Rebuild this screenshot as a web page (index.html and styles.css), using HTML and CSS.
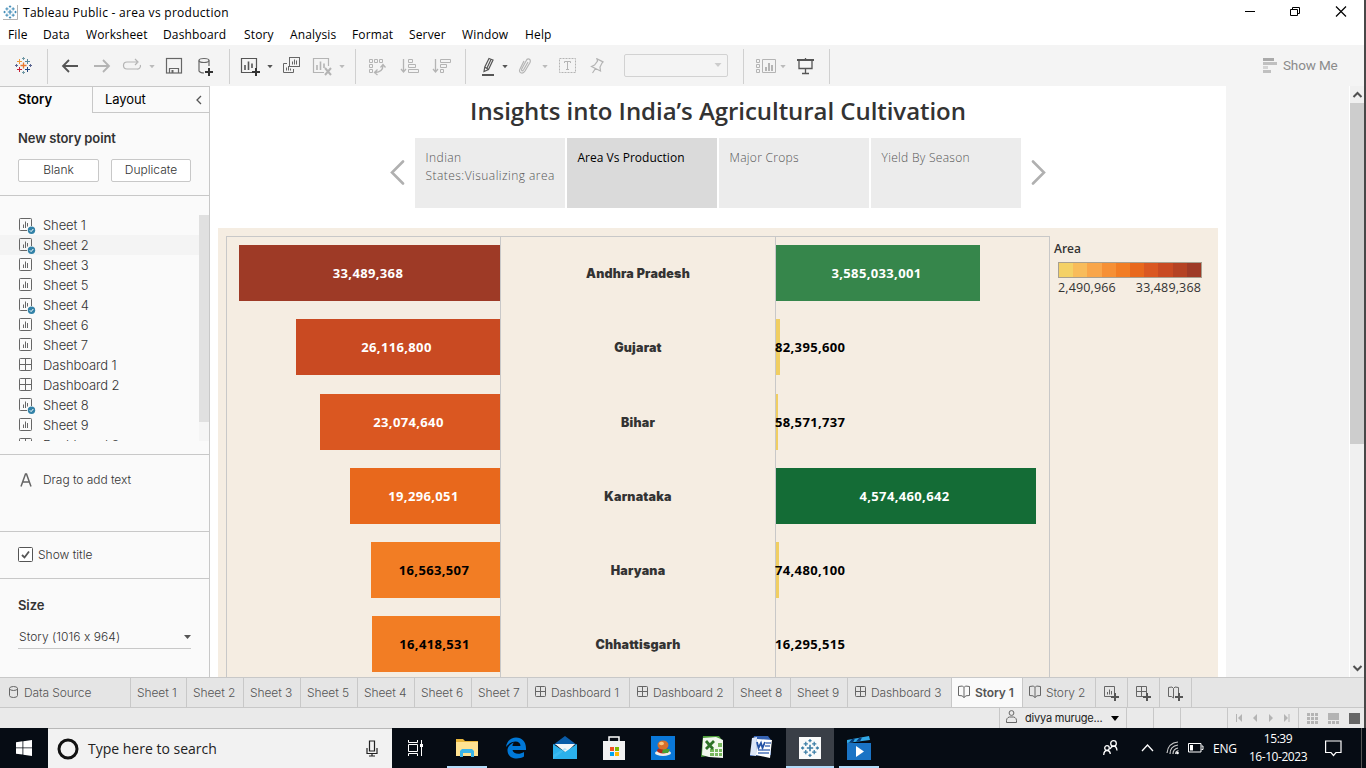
FILE: index.html
```html
<!DOCTYPE html>
<html lang="en">
<head>
<meta charset="utf-8">
<title>Tableau Public - area vs production</title>
<link rel="stylesheet" href="styles.css">
</head>
<body>
<svg class="defs" width="0" height="0">
  <symbol id="logo" viewBox="0 0 18 18"><g fill="none" stroke="currentColor"><path stroke-width="1.5" d="M9 6v6M6 9h6"/><path stroke-width="1.2" d="M5 3v4M3 5h4M13 3v4M11 5h4M5 11v4M3 13h4M13 11v4M11 13h4M9 .5v3M7.5 2h3M9 14.5v3M7.5 16h3M2 7.5v3M.5 9h3M16 7.5v3M14.500 9h3"/></g></symbol>
  <symbol id="caret" viewBox="0 0 6 20"><path fill="currentColor" d="M.3 9h5.400L3 12.300z"/></symbol>
  <symbol id="sheet" viewBox="0 0 16 14"><g fill="none" stroke="#666"><rect x=".5" y=".5" width="12" height="12" rx=".8"/><path d="M4.500 6.500V10M6.500 3.500V10M8.500 5V10"/></g></symbol>
  <symbol id="sheetok" viewBox="0 0 17 16"><path fill="none" stroke="#666" d="M8 12.500H1.300a.8.8 0 0 1-.8-.8V1.300A.8.8 0 0 1 1.300.5h10.400a.8.8 0 0 1 .8.8V8M4.500 6.500V10M6.500 3.500V10M8.500 5v3.500"/><circle cx="12.500" cy="12.300" r="3.700" fill="#3282a8"/><path fill="none" stroke="#fff" d="m10.800 12.300 1.300 1.300 2.200-2.600"/></symbol>
  <symbol id="dash" viewBox="0 0 13 13"><g fill="none" stroke="#666"><rect x=".5" y=".5" width="12" height="12" rx=".8"/><path d="M6.500.5v12M.5 6.500h12"/></g></symbol>
  <symbol id="dashtab" viewBox="0 0 11 11"><g fill="none" stroke="#666"><rect x=".5" y=".5" width="10" height="10" rx=".8"/><path d="M5.500.5v10M.5 5.500h10"/></g></symbol>
  <symbol id="book" viewBox="0 0 12 13"><path fill="none" stroke="#666" d="M6 2.500 4.500 1 .5 1.500v9l3.500.3 2 1.700 2-1.700 3.500-.3v-9L7.500 1zM6 2.500v10"/></symbol>
</svg>

<div class="window">
<header class="titlebar">
  <svg class="app-icon" viewBox="0 0 16 16"><path fill="none" stroke="#aaa" d="M15.500 0v15.500H0"/><use href="#logo" x="0" y="0" width="15" height="15"/></svg>
  <span class="title-text">Tableau Public - area vs production</span>
  <svg class="win-buttons" viewBox="0 0 103 12"><g fill="none" stroke="#000"><path d="M0 6.500h10M45.500 4.500h7v6h-7zM47.500 4.500v-2h7v6h-2"/><path stroke-width="1.200" d="m91 1.500 10 10M101 1.500l-10 10"/></g></svg>
</header>
<nav class="menu"><span>File</span><span>Data</span><span>Worksheet</span><span>Dashboard</span><span>Story</span><span>Analysis</span><span>Format</span><span>Server</span><span>Window</span><span>Help</span></nav>

<div class="toolbar">
  <svg class="ic" viewBox="0 0 20 20" fill="none"><path stroke="#e8762c" stroke-width="1.300" d="M9.500 6.500v6M6.500 9.500h6"/><path stroke="#ee9a3a" d="M5.500 3v5M3 5.500h5"/><path stroke="#59879b" d="M13.500 3v5M11 5.500h5"/><path stroke="#c72037" d="M5.500 11v5M3 13.500h5"/><path stroke="#1f457e" d="M13.500 11v5M11 13.500h5"/><path stroke="#7199a6" d="M9.500 1v3M8 2.500h3M9.500 15v3M8 16.500h3"/><path stroke="#5b6591" d="M2.500 8v3M1 9.500h3M16.500 8v3M15 9.500h3"/></svg>
  <i class="sep"></i>
  <svg class="ic" viewBox="0 0 20 20" fill="none" stroke="#555" stroke-width="1.800"><path d="M17 10H2M8 4l-6 6 6 6"/></svg>
  <svg class="ic" viewBox="0 0 20 20" fill="none" stroke="#b4b4b4" stroke-width="1.800"><path d="M1 10h15M10 4l6 6-6 6"/></svg>
  <svg class="ic" viewBox="0 0 20 20" fill="none" stroke="#b4b4b4" stroke-width="1.200"><path d="M15 6H5a3.500 3.500 0 0 0 0 7h10a3 3 0 0 0 3.300-4M13 3l3 3-3 3"/></svg>
  <svg class="caret off"><use href="#caret"/></svg>
  <svg class="ic" viewBox="0 0 20 20" fill="none" stroke="#666" stroke-width="1.200"><rect x="1.500" y="2.500" width="15" height="14.500"/><path d="M4.500 17v-4.500h9V17"/><path d="M7.500 14v3" stroke-width="2"/></svg>
  <svg class="ic" viewBox="0 0 20 20" fill="none" stroke="#666" stroke-width="1.200"><ellipse cx="7" cy="4.500" rx="5" ry="2"/><path d="M2 4.500V15q1 2 5 2M12 4.500V10"/><path d="M12 12v8M8 16h8" stroke="#333" stroke-width="2"/></svg>
  <i class="sep"></i>
  <svg class="ic" viewBox="0 0 20 20" fill="none" stroke="#555" stroke-width="1.200"><path d="M12 16.500H1.500v-14h15V12"/><path stroke-width="1.600" d="M5 9v5M8.500 5.500V14M12 7.500V12"/><path d="M16 12v8M12 16h8" stroke="#333" stroke-width="2"/></svg>
  <svg class="caret"><use href="#caret"/></svg>
  <svg class="ic" viewBox="0 0 20 20" fill="none" stroke="#666"><rect x="7.500" y="1.500" width="10" height="9"/><path d="M10.500 5.500v3M12.500 3.500v5M14.500 4.500v4M5 7.500H1.500v9h10V13M4.500 11.500v3M6.500 10v4.500M8.500 12.500v2"/></svg>
  <svg class="ic" viewBox="0 0 20 20" fill="none" stroke="#b4b4b4" stroke-width="1.200"><path d="M12 16.500H1.500v-14h15V10"/><path stroke-width="1.600" d="M5 9v5M8.500 5.500V14M12 7.500V12"/><path d="m13 12 6 7M19 12l-6 7" stroke-width="2"/></svg>
  <svg class="caret off"><use href="#caret"/></svg>
  <i class="sep"></i>
  <svg class="ic" viewBox="0 0 20 20" fill="none" stroke="#b4b4b4"><path d="M2.500 3.500h3v3h-3zM7.500 3.500h3v3h-3zM12.500 3.500h3v3h-3zM2.500 8.500h3v3h-3zM2.500 13.500h3v3h-3z"/><path stroke-width="1.300" d="M8 16.500q8-.5 8-7M13.500 11.500l2.500-3 2.500 3M10.500 13.500l-3 3 3 2.500"/></svg>
  <svg class="ic" viewBox="0 0 20 20" fill="none" stroke="#b4b4b4"><path stroke-width="1.300" d="M3.500 3v13M1 13l2.500 3L6 13"/><path d="M8.500 3.500h4v3h-4zM8.500 8.500h7v3h-7zM8.500 13.500h10v3h-10z"/></svg>
  <svg class="ic" viewBox="0 0 20 20" fill="none" stroke="#b4b4b4"><path stroke-width="1.300" d="M3.500 3v13M1 13l2.500 3L6 13"/><path d="M8.500 3.500h10v3h-10zM8.500 8.500h6v3h-6zM8.500 13.500h3v3h-3z"/></svg>
  <i class="sep"></i>
  <svg class="ic" viewBox="0 0 20 20" fill="none" stroke="#555" stroke-width="1.200"><path d="m8 2.500 4 1.500-4.500 9.500-4.500 2 .8-4.500zM3.800 11l3.700 2.500M10 3.500 6 12"/><path stroke-width="2" d="M1 19h12"/></svg>
  <svg class="caret"><use href="#caret"/></svg>
  <svg class="ic" viewBox="0 0 20 20" fill="none" stroke="#b4b4b4" stroke-width="1.200"><path d="M11 6 6.500 14c-1 1.500-2.500.5-1.800-1L9 5c1.500-3.500 5.500-2 4 1.500L8 15c-2.500 4-7 1.500-5-2L7 5"/></svg>
  <svg class="caret off"><use href="#caret"/></svg>
  <svg class="ic" viewBox="0 0 20 20" fill="none" stroke="#b4b4b4"><rect x="1.500" y="2.500" width="16" height="14" stroke-dasharray="2 1"/><path d="M6.500 7V5.500h6V7M9.500 5.500v8M8 13.500h3"/></svg>
  <svg class="ic" viewBox="0 0 20 20" fill="none" stroke="#b4b4b4" stroke-width="1.200"><path d="m7 3 6 3-1 1-2 4 .5 4-9-4.500L4.500 9l3-4zM5.500 12.500 2.500 17M6.500 2.500l7 3.500"/></svg>
  <span class="combo"><svg width="8" height="5"><path fill="#ccc" d="M.5 0h7L4 4z"/></svg></span>
  <i class="sep"></i>
  <svg class="ic" viewBox="0 0 22 20" fill="none" stroke="#b4b4b4"><path d="M1.500 3.500h3v3h-3zM1.500 8.500h3v3h-3zM1.500 13.500h3v3h-3zM7.500 3.500h13v13h-13z"/><path stroke-width="2" d="M11 11v4M14 7v8M17 9v6"/></svg>
  <svg class="caret off"><use href="#caret"/></svg>
  <svg class="ic" viewBox="0 0 20 20" fill="none" stroke="#555" stroke-width="1.300"><path stroke-width="2" d="M1 4h17"/><path d="M3 4v8.500h13V4M9.500 2v2M9.500 12.500v5M6 17.500h7"/></svg>
  <i class="sep"></i>
  <svg class="ic" viewBox="0 0 20 20"><path fill="#aaa" d="M0 2h11v3H0z"/><path fill="#c0c0c0" d="M0 6h14v3H0zM0 14h8v3H0z"/><path fill="#d4d4d4" d="M0 10h5v3H0z"/></svg>
  <span class="showme">Show Me</span>
</div>

<main class="main">
  <aside class="side">
    <div class="side-tabs"><span class="on">Story</span><span class="off">Layout<svg width="6" height="10" viewBox="0 0 6 10"><path fill="none" stroke="#555" stroke-width="1.300" d="M5 1 1 5l4 4"/></svg></span></div>
    <section class="new-point"><h3>New story point</h3><div class="btns"><button>Blank</button><button>Duplicate</button></div></section>
    <section class="sheets">
      <ul>
        <li><svg><use href="#sheetok" width="17" height="16"/></svg>Sheet 1</li>
        <li class="hover"><svg><use href="#sheetok" width="17" height="16"/></svg>Sheet 2</li>
        <li><svg><use href="#sheet" width="16" height="14"/></svg>Sheet 3</li>
        <li><svg><use href="#sheet" width="16" height="14"/></svg>Sheet 5</li>
        <li><svg><use href="#sheetok" width="17" height="16"/></svg>Sheet 4</li>
        <li><svg><use href="#sheet" width="16" height="14"/></svg>Sheet 6</li>
        <li><svg><use href="#sheet" width="16" height="14"/></svg>Sheet 7</li>
        <li><svg><use href="#dash" width="13" height="13"/></svg>Dashboard 1</li>
        <li><svg><use href="#dash" width="13" height="13"/></svg>Dashboard 2</li>
        <li><svg><use href="#sheetok" width="17" height="16"/></svg>Sheet 8</li>
        <li><svg><use href="#sheet" width="16" height="14"/></svg>Sheet 9</li>
        <li><svg><use href="#dash" width="13" height="13"/></svg>Dashboard 3</li>
      </ul>
      <div class="track"><div class="thumb"></div></div>
    </section>
    <section class="drag"><svg width="12" height="14" viewBox="0 0 12 14"><path fill="none" stroke="#666" stroke-width="1.500" d="M1 13.500 5.500 1h1L11 13.500M2.800 9h6.400"/></svg>Drag to add text</section>
    <section class="show"><svg width="15" height="15" viewBox="0 0 15 15"><rect x=".5" y=".5" width="14" height="14" rx="1" fill="#fff" stroke="#555"/><path fill="none" stroke="#555" stroke-width="1.800" d="m4 8 2.500 2.500L11 4.500"/></svg>Show title</section>
    <section class="size"><h3>Size</h3><div class="select">Story (1016 x 964)<svg width="7" height="4"><path fill="#555" d="M0 0h7L3.500 4z"/></svg></div></section>
  </aside>

  <div class="canvas">
    <div class="story">
      <h1>Insights into India’s Agricultural Cultivation</h1>
      <div class="points">
        <svg width="16" height="26" viewBox="0 0 16 26"><path fill="none" stroke="#b0b0b0" stroke-width="2.600" stroke-linecap="round" d="M14 1.500 3 12.500l11 11"/></svg>
        <div class="cards"><div>Indian<br>States:Visualizing area</div><div class="on">Area Vs Production</div><div>Major Crops</div><div>Yield By Season</div></div>
        <svg width="16" height="26" viewBox="0 0 16 26"><path fill="none" stroke="#b0b0b0" stroke-width="2.600" stroke-linecap="round" d="m2 1.500 11 11-11 11"/></svg>
      </div>
      <div class="viz">
        <div class="chart">
          <div class="row"><div class="cell l"><b class="bar" style="width:261px;background:#9e3a26">33,489,368</b></div><div class="cell name">Andhra Pradesh</div><div class="cell r"><b class="bar" style="width:204px;background:#36864b">3,585,033,001</b></div></div>
          <div class="row"><div class="cell l"><b class="bar" style="width:204px;background:#c94a22">26,116,800</b></div><div class="cell name">Gujarat</div><div class="cell r"><b class="bar small" style="width:4px">82,395,600</b></div></div>
          <div class="row"><div class="cell l"><b class="bar" style="width:180px;background:#da5721">23,074,640</b></div><div class="cell name">Bihar</div><div class="cell r"><b class="bar small" style="width:2px">58,571,737</b></div></div>
          <div class="row"><div class="cell l"><b class="bar" style="width:150px;background:#e8681c">19,296,051</b></div><div class="cell name">Karnataka</div><div class="cell r"><b class="bar" style="width:260px;background:#146c36">4,574,460,642</b></div></div>
          <div class="row"><div class="cell l"><b class="bar dark" style="width:129px;background:#f27d24">16,563,507</b></div><div class="cell name">Haryana</div><div class="cell r"><b class="bar small" style="width:3px">74,480,100</b></div></div>
          <div class="row"><div class="cell l"><b class="bar dark" style="width:128px;background:#f27d24">16,418,531</b></div><div class="cell name">Chhattisgarh</div><div class="cell r"><b class="bar small" style="width:0px">16,295,515</b></div></div>
        </div>
        <div class="legend"><h4>Area</h4><div class="ramp"></div><div class="range"><span>2,490,966</span><span>33,489,368</span></div></div>
      </div>
    </div>
    <div class="vscroll"><svg width="14" height="17"><path fill="none" stroke="#505050" stroke-width="2" d="m3.500 11 4-4 4 4"/></svg><div class="thumb"></div><svg width="14" height="17"><path fill="none" stroke="#505050" stroke-width="2" d="m3.500 6 4 4 4-4"/></svg></div>
  </div>
</main>

<nav class="tabs">
  <span><svg width="9" height="12" viewBox="0 0 9 12"><g fill="none" stroke="#666"><ellipse cx="4.500" cy="2.500" rx="4" ry="2"/><path d="M.5 2.500v7q0 2 4 2t4-2v-7"/></g></svg>Data Source</span>
  <span>Sheet 1</span><span>Sheet 2</span><span>Sheet 3</span><span>Sheet 5</span><span>Sheet 4</span><span>Sheet 6</span><span>Sheet 7</span>
  <span class="d"><svg width="11" height="11"><use href="#dashtab" width="11" height="11"/></svg>Dashboard 1</span>
  <span class="d"><svg width="11" height="11"><use href="#dashtab" width="11" height="11"/></svg>Dashboard 2</span>
  <span>Sheet 8</span><span>Sheet 9</span>
  <span class="d"><svg width="11" height="11"><use href="#dashtab" width="11" height="11"/></svg>Dashboard 3</span>
  <span class="on"><svg width="12" height="13"><use href="#book" width="12" height="13"/></svg>Story 1</span>
  <span><svg width="12" height="13"><use href="#book" width="12" height="13"/></svg>Story 2</span>
  <span class="add"><svg width="16" height="16" viewBox="0 0 16 16"><path fill="none" stroke="#666" d="M7 10.500H.5V.5h10V7M3.500 6v2.500M5.500 3.500v5M7.500 5v3.500"/><path stroke="#555" stroke-width="2" d="M11 7v8M7 11h8"/></svg></span>
  <span class="add"><svg width="16" height="16" viewBox="0 0 16 16"><path fill="none" stroke="#666" d="M7 10.500H.5V.5h10V7M5.500.5v10M.5 5.500h10"/><path stroke="#555" stroke-width="2" d="M11 7v8M7 11h8"/></svg></span>
  <span class="add"><svg width="16" height="16" viewBox="0 0 16 16"><path fill="none" stroke="#666" d="M5.500 12V2.500L4 1 .5 1.500v9h3zM5.500 2.500 7 1l3.500.5V7"/><path stroke="#555" stroke-width="2" d="M11 7v8M7 11h8"/></svg></span>
  <span></span>
</nav>

<footer class="status">
  <span></span>
  <span class="user"><svg width="11" height="14" viewBox="0 0 11 14"><g fill="none" stroke="#666"><circle cx="5.500" cy="3" r="2.400"/><path d="M.5 12.500q-.5-5 3-5.500h4q3.500.5 3 5.500z"/></g></svg>divya muruge...<svg class="tri" width="8" height="5"><path d="M0 0h8L4 5z"/></svg></span>
  <span></span><span></span><span></span>
  <span><svg width="56" height="10" viewBox="0 0 56 10"><path fill="#b4b4b4" d="M1 1h1v8H1zM7 1v8L3 5zM22 1v8l-4-4zM34 1v8l4-4zM49 1v8l4-4zM53.500 1h1v8h-1z"/></svg></span>
  <span><svg width="54" height="11" viewBox="0 0 54 11"><path fill="#b4b4b4" d="M0 0h3v3H0zM4 0h3v3H4zM8 0h3v3H8zM0 4h3v3H0zM4 4h3v3H4zM8 4h3v3H8zM0 8h3v3H0zM4 8h3v3H4zM8 8h3v3H8zM21 0h11v7H21zM21 8h3v3h-3zM25 8h3v3h-3zM29 8h3v3h-3z"/><path fill="#666" d="M42 0h11v11H42z"/></svg></span>
</footer>
</div>

<div class="taskbar">
  <div class="start"><svg width="16" height="16" viewBox="0 0 16 16"><path fill="#fff" d="M0 2.200 6.500 1.300v6.200H0zM7.300 1.200 16 0v7.500H7.300zM0 8.300h6.500v6.300L0 13.700zM7.300 8.300H16V16l-8.700-1.200z"/></svg></div>
  <div class="search"><svg width="22" height="22" viewBox="0 0 22 22"><circle cx="11" cy="11" r="9" fill="none" stroke="#111" stroke-width="3"/></svg><span>Type here to search</span><svg width="12" height="17" viewBox="0 0 12 17"><path fill="none" stroke="#222" stroke-width="1.200" d="M3.500 1h5v10h-5zM1 8v5.500h10V8M6 13.500V16M3 16h6"/></svg></div>
  <div class="view"><svg width="17" height="16" viewBox="0 0 17 16"><path fill="none" stroke="#fff" d="M1.500 0v2.500h9V0M1.500 16v-2.500h9V16M1.500 4.500h9v7h-9zM14.500 0v16"/><path fill="#fff" d="M13 4h3v3h-3z"/></svg></div>
  <div class="apps">
    <span class="run"><svg width="24" height="24" viewBox="0 0 24 24"><path fill="#e8b63c" d="M1 3h7l2 2h13v14H1z"/><path fill="#ffe392" d="M1 6h22v14H1z"/><path fill="#39b5ea" d="M5 21v-6l2-2h10l2 2v6h-3v-4H8v4z"/></svg></span>
    <span><svg width="24" height="24" viewBox="0 0 24 24"><path fill="#0078d7" d="M2 11C3 4 8 1.500 12 1.500c6 0 10 4 10 11V14H8.500c.5 4 7 5 11.500 2v4.500C12 25 3 21.500 3.500 13.500 4 10 7 7.500 10 6.500c-1 1-1.500 2-1.500 3.500h8C16.500 3.500 7 4 2 11z"/></svg></span>
    <span><svg width="24" height="24" viewBox="0 0 24 24"><path fill="#0a5ca8" d="M0 9 12 0l12 9z"/><path fill="#f4f6f8" d="M2 8h20l-9 9z"/><path fill="#2bb1ec" d="m0 8 12 8L24 8v15H0z"/><path fill="#58c8f5" d="m0 23 12-9h2l-2-2-12 7z" opacity=".4"/></svg></span>
    <span><svg width="24" height="24" viewBox="0 0 24 24"><path fill="none" stroke="#fff" stroke-width="1.500" d="M7 6V1h10v5"/><path fill="#f2f2f2" d="M1 5h22v19H1z"/><path fill="#f25022" d="M8 11h4v4H8z"/><path fill="#7fba00" d="M13 11h4v4h-4z"/><path fill="#00a4ef" d="M8 16h4v4H8z"/><path fill="#ffb900" d="M13 16h4v4h-4z"/></svg></span>
    <span><svg width="24" height="24" viewBox="0 0 24 24"><path fill="#0a78d8" d="M0 0h24v24H0z"/><ellipse cx="12" cy="17" rx="8" ry="3" fill="#f0eee8"/><ellipse cx="12" cy="14.500" rx="6" ry="3" fill="#b5281c"/><path fill="#48a033" d="M12 13h7l-2 4h-6z"/><ellipse cx="12" cy="9" rx="5.500" ry="4.500" fill="#d8702b"/><ellipse cx="10.500" cy="7.500" rx="2.500" ry="1.700" fill="#f8c67f"/></svg></span>
    <span><svg width="24" height="24" viewBox="0 0 24 24"><path fill="#4f9e3c" d="M3 0h16l3 4v14L1 21z"/><path fill="#f2f8ee" d="m3 2 13-1 7 3v18l-14-1-7-2z"/><path fill="#78b85e" d="M10 13h4v3h-4zM15 13h3v3h-3zM19 13h3v3h-3zM10 17h4v3h-4zM15 17h3v3h-3zM19 17h3v3h-3zM18 7h4v4h-4z"/><path fill="none" stroke="#2d7127" stroke-width="2.800" d="m6 5 7 8M14 5l-8 8"/></svg></span>
    <span><svg width="24" height="24" viewBox="0 0 24 24"><path fill="#3562b2" d="M5 0h14l3 4v15L1 20z"/><path fill="#dce6f7" d="m3 2 5-1-1 19-6-1z"/><path fill="#fff" d="m8 3 15 1-2 18-14-3z"/><path fill="none" stroke="#2452a5" stroke-width="1.800" d="m8 6 1.500 6L12 7l1.500 5L16 6"/><path stroke="#4e74bb" stroke-width="1.500" d="M17 7h5M16 10h5M9 14h12M9 17h11"/></svg></span>
    <span class="run act"><svg width="24" height="24" viewBox="0 0 24 24"><path fill="#fafafa" d="M1 1h22v22H1z"/><g color="#3c7ea6"><use href="#logo" x="2.500" y="2.500" width="19" height="19"/></g></svg></span>
    <span class="run"><svg width="24" height="24" viewBox="0 0 24 24"><path fill="#1a73c4" d="M0 7h24v17H0z"/><path fill="#32a9e8" d="m0 4 22-4 1 4L0 7z"/><path fill="#083c78" d="m5 3 3-.5-2 4H2zM12 2l3-.5-2 4H9z"/><path fill="#fff" d="m9 10 8 5.500L9 21z"/></svg></span>
  </div>
  <div class="tray">
    <svg width="17" height="16" viewBox="0 0 17 16"><g fill="none" stroke="#fff" stroke-width="1.300"><circle cx="10.500" cy="3.500" r="2.800"/><circle cx="4" cy="8" r="2.300"/><path d="M.7 15q.3-4.500 3.300-4.500T7.300 14M7 9q1.500-3 3.500-3 3 0 3.500 4.500"/></g></svg>
    <svg width="13" height="8" viewBox="0 0 13 8"><path fill="none" stroke="#fff" stroke-width="1.300" d="m1 7 5.500-6L12 7"/></svg>
    <svg width="14" height="14" viewBox="0 0 14 14"><g fill="none" stroke="#ccc" stroke-width="1.200"><path d="M1 12Q2 2 12 1M4 13Q4 5 12 4M7 13q0-5 5-6M9.500 13q0-2.500 3-3.500"/></g><circle cx="11.500" cy="12" r="1.300" fill="#fff"/></svg>
    <svg width="16" height="10" viewBox="0 0 16 10"><path fill="none" stroke="#fff" d="M.5.500h12.500v8.500H.5zM13.500 3h1.500v3.500h-1.500"/><path fill="#fff" d="M2 2h3v5.500H2z"/></svg>
    <span class="lang">ENG</span>
    <span class="clock">15:39<br>16-10-2023</span>
    <svg width="17" height="17" viewBox="0 0 17 17"><path fill="none" stroke="#fff" stroke-width="1.200" d="M.6 1h15.400v11.500h-5l-2.500 3-2.500-3H.6z"/></svg>
    <i></i>
  </div>
</div>
</body>
</html>
```
FILE: styles.css
```css
* { box-sizing: border-box; }
body { margin: 0; width: 1366px; height: 768px; overflow: hidden; background: #fff; font-family: "Open Sans", "Noto Sans", sans-serif; font-size: 12px; color: #333; }
h1, h3, h4, ul { margin: 0; padding: 0; }
svg { display: block; flex: none; }
.defs { position: absolute; }
.window { width: 1366px; height: 728px; border-right: 2px solid #484848; display: flex; flex-direction: column; }

.titlebar { height: 24px; flex: none; display: flex; align-items: center; padding-left: 3px; color: #000; }
.app-icon { width: 15px; height: 15px; margin-right: 5px; color: #3a87b4; }
.title-text { font-size: 12px; letter-spacing: .28px; }
.win-buttons { width: 103px; height: 12px; margin: -3px 16px 0 auto; }
.menu { height: 21px; flex: none; display: grid; grid-template-columns: 35px 43px 77px 81px 46px 62px 57px 53px 63px 40px; padding-left: 8px; line-height: 22px; letter-spacing: .15px; color: #000; }

.toolbar { height: 41px; flex: none; background: #f4f4f4; display: grid; align-items: start; padding-left: 14px;
  grid-template-columns: 33px 14px 32px 29px 27px 16px 32px 32px 11px 27px 15px 30px 27px 16px 12px 33px 32px 33px 16px 21px 15px 25px 16px 32px 34px 119px 12px 25px 16px 33px 434px 20px auto; }
.ic { width: 20px; height: 20px; margin-top: 11px; }
.ic[viewBox="0 0 22 20"] { width: 22px; }
.caret { width: 6px; height: 20px; margin-top: 11px; color: #555; }
.caret.off { color: #bbb; }
.sep { width: 1px; height: 35px; margin-top: 4px; background: #d0d0d0; }
.combo { width: 104px; height: 23px; margin-top: 9px; border: 1px solid #d2d2d2; border-radius: 2px; display: flex; align-items: center; justify-content: flex-end; padding-right: 5px; }
.showme { font: 13.5px/20px Roboto, sans-serif; letter-spacing: -.15px; color: #8b8b8b; margin-top: 10px; white-space: nowrap; }

.main { height: 591px; flex: none; display: flex; }
.side { width: 210px; flex: none; border-right: 1px solid #c8c8c8; background: #fafafa; font-family: Inter, sans-serif; font-weight: 300; letter-spacing: -.1px; color: #333; }
.side-tabs { height: 27px; display: flex; border-top: 1px solid #c8c8c8; font-size: 13px; line-height: 25px; color: #000; }
.side-tabs .on { width: 92px; padding-left: 18px; font-weight: 600; letter-spacing: .05px; }
.side-tabs .off { flex: 1; border-left: 1px solid #c8c8c8; border-bottom: 1px solid #c8c8c8; display: flex; align-items: center; justify-content: space-between; padding: 0 7px 0 12px; font-weight: 400; }
.side section { border-bottom: 1px solid #c8c8c8; }
.side h3 { font-size: 13px; font-weight: 600; line-height: 20px; }
.new-point { height: 83px; padding: 15px 18px 0; }
.btns { display: flex; gap: 12px; margin-top: 11px; }
.btns button { width: 81px; height: 23px; padding: 0 0 2px; background: #fff; border: 1px solid #c8c8c8; border-radius: 2px; font: inherit; color: #333; }
.btns button + button { width: 80px; }
.sheets { height: 259px; padding: 19px 0 13px; display: flex; }
.sheets ul { list-style: none; width: 199px; height: 226px; overflow: hidden; font-size: 13px; }
.sheets li { height: 20px; padding-left: 19px; display: flex; align-items: center; line-height: 20px; }
.sheets li.hover { background: #f4f4f4; }
.sheets li svg { width: 18px; height: 16px; margin: 2px 6px 0 0; }
.track { width: 10px; height: 226px; background: #f5f5f5; }
.track .thumb { height: 207px; background: #e0e0e0; }
.drag { height: 77px; padding: 18px 0 0 20px; display: flex; gap: 11px; line-height: 14px; letter-spacing: -.05px; }
.show { height: 47px; padding: 0 0 1px 18px; display: flex; align-items: center; gap: 5px; letter-spacing: 0; }
.side .size { border: 0; padding: 16px 18px 0; }
.select { height: 21px; margin-top: 13px; padding: 0 0 2px 1px; border-bottom: 1px solid #c8c8c8; display: flex; align-items: center; justify-content: space-between; line-height: 16px; letter-spacing: .05px; }

.canvas { flex: 1; background: #f4f4f4; display: flex; justify-content: space-between; }
.story { width: 1016px; background: #fff; }
.story h1 { height: 52px; text-align: center; font: 600 24px/50px "Open Sans", sans-serif; letter-spacing: -.05px; color: #333; }
.points { display: flex; justify-content: center; align-items: center; gap: 10px; height: 70px; }
.cards { display: grid; grid-template-columns: repeat(4, 150px); gap: 2px; height: 70px; }
.cards div { background: #ececec; padding: 11px 0 0 10.500px; font: 300 12px/18px "Open Sans", sans-serif; letter-spacing: .46px; color: #555; white-space: nowrap; }
.cards div:nth-child(n+3) { letter-spacing: .3px; }
.cards .on { background: #dadada; color: #000; letter-spacing: .02px; font-weight: 400; }
.viz { width: 1000px; height: 449px; margin: 20px 0 0 8px; background: #f5ede2; padding: 8px 0 0 8px; display: flex; }
.chart { width: 824px; height: 441px; border: 1px solid #c8c8c8; border-bottom: 0; overflow: hidden; }
.row { display: grid; grid-template-columns: 273px 276px 273px; height: 74.250px; }
.cell { display: flex; align-items: center; }
.cell .bar { margin-top: -2px; }
.cell.l { justify-content: flex-end; }
.cell.name { border: solid #c8c8c8; border-width: 0 1px; justify-content: center; font: 900 12.500px Inter, sans-serif; letter-spacing: .2px; color: #333; padding-bottom: 1px; }
.bar { height: 56px; display: flex; align-items: center; justify-content: center; color: #fff; font-size: 13px; font-weight: 700; letter-spacing: .35px; white-space: nowrap; padding-right: 3px; }
.bar.dark { color: #000; }
.bar.small { background: #f0ce62; color: #000; justify-content: flex-start; text-indent: -1px; padding: 0; }
.legend { width: 168px; padding: 5px 16px 0 4px; }
.legend h4 { font: 600 12px/16px "Open Sans", sans-serif; }
.ramp { width: 144px; height: 16px; margin: 5px 0 0 4px; border: 1px solid #a8a090; background: linear-gradient(90deg, #f4d166 10%, #f8bc5b 10% 20%, #f9a64a 20% 30%, #f69035 30% 40%, #f27d24 40% 50%, #e8681c 50% 60%, #da5721 60% 70%, #c94a22 70% 80%, #b54223 80% 90%, #9e3a26 90%); }
.range { width: 143px; margin: 1px 0 0 4px; display: flex; justify-content: space-between; font-size: 12.500px; line-height: 17px; letter-spacing: .15px; }
.vscroll { width: 15px; background: #f0f0f0; border-left: 1px solid #fff; display: flex; flex-direction: column; }
.vscroll .thumb { height: 341px; background: #cdcdcd; margin-bottom: auto; }

.tabs { height: 31px; flex: none; background: #e5e5e5; border: solid #c8c8c8; border-width: 1px 0; display: grid; font: 300 12px Inter, sans-serif; color: #555; letter-spacing: -.1px;
  grid-template-columns: 131px 56px 57px 57px 57px 57px 57px 56px 102px 104px 57px 57px 104px 71px 73px 32px 32px 32px 1fr; }
.tabs span { border-right: 1px solid #c8c8c8; padding-left: 6px; display: flex; align-items: center; gap: 5px; white-space: nowrap; }
.tabs span:first-child { padding-left: 9px; gap: 6px; }
.tabs span:last-child { border: 0; }
.tabs .d { padding-left: 7px; }
.tabs svg { margin-top: -2px; }
.tabs .on { background: #fafafa; font-weight: 600; padding-bottom: 1px; }
.tabs .add { padding: 5px 0 0 8px; }
.status { height: 20px; flex: none; background: #eaeaea; display: grid; grid-template-columns: 1000px 127px 27px 27px 47px 71px 1fr; }
.status span { border-right: 1px solid #c8c8c8; display: flex; align-items: center; padding-left: 7px; }
.status span:last-child { border: 0; padding-left: 8px; }
.status .user { padding-left: 6px; font: 400 11px/18px Inter, sans-serif; letter-spacing: -.2px; color: #222; gap: 8px; white-space: nowrap; }
.user svg { margin-top: -2px; }
.user .tri { margin: 0 0 0 1px; }

.taskbar { height: 40px; background: #060c14; display: flex; color: #fff; }
.start { width: 48px; display: flex; align-items: center; justify-content: center; }
.search { width: 344px; background: #f2f2f2; border-top: 1px solid #b8b8b8; color: #222; display: flex; align-items: center; padding: 0 14px 0 9px; font-size: 14px; }
.search span { flex: 1; margin-left: 9px; }
.view { width: 51px; display: flex; align-items: center; padding-left: 15px; }
.apps { display: grid; grid-template-columns: repeat(9, 48px); gap: 1px; }
.apps span { display: flex; align-items: center; justify-content: center; border-bottom: 2px solid transparent; padding-top: 2px; }
.apps .run { background: linear-gradient(#b3dcfa, #b3dcfa) 50% 100% / 40px 2px no-repeat border-box; }
.apps .run.act { background: #3a3f47; border-color: #b3dcfa; }
.tray { margin-left: auto; display: grid; grid-template-columns: 38px 25px 22px 25px 33px 79px 36px 5px; align-items: center; }
.lang { letter-spacing: -.2px; }
.clock { text-align: center; line-height: 18px; width: 64px; letter-spacing: -.45px; white-space: nowrap; }
.tray i { width: 1px; height: 40px; background: #555; }
```
